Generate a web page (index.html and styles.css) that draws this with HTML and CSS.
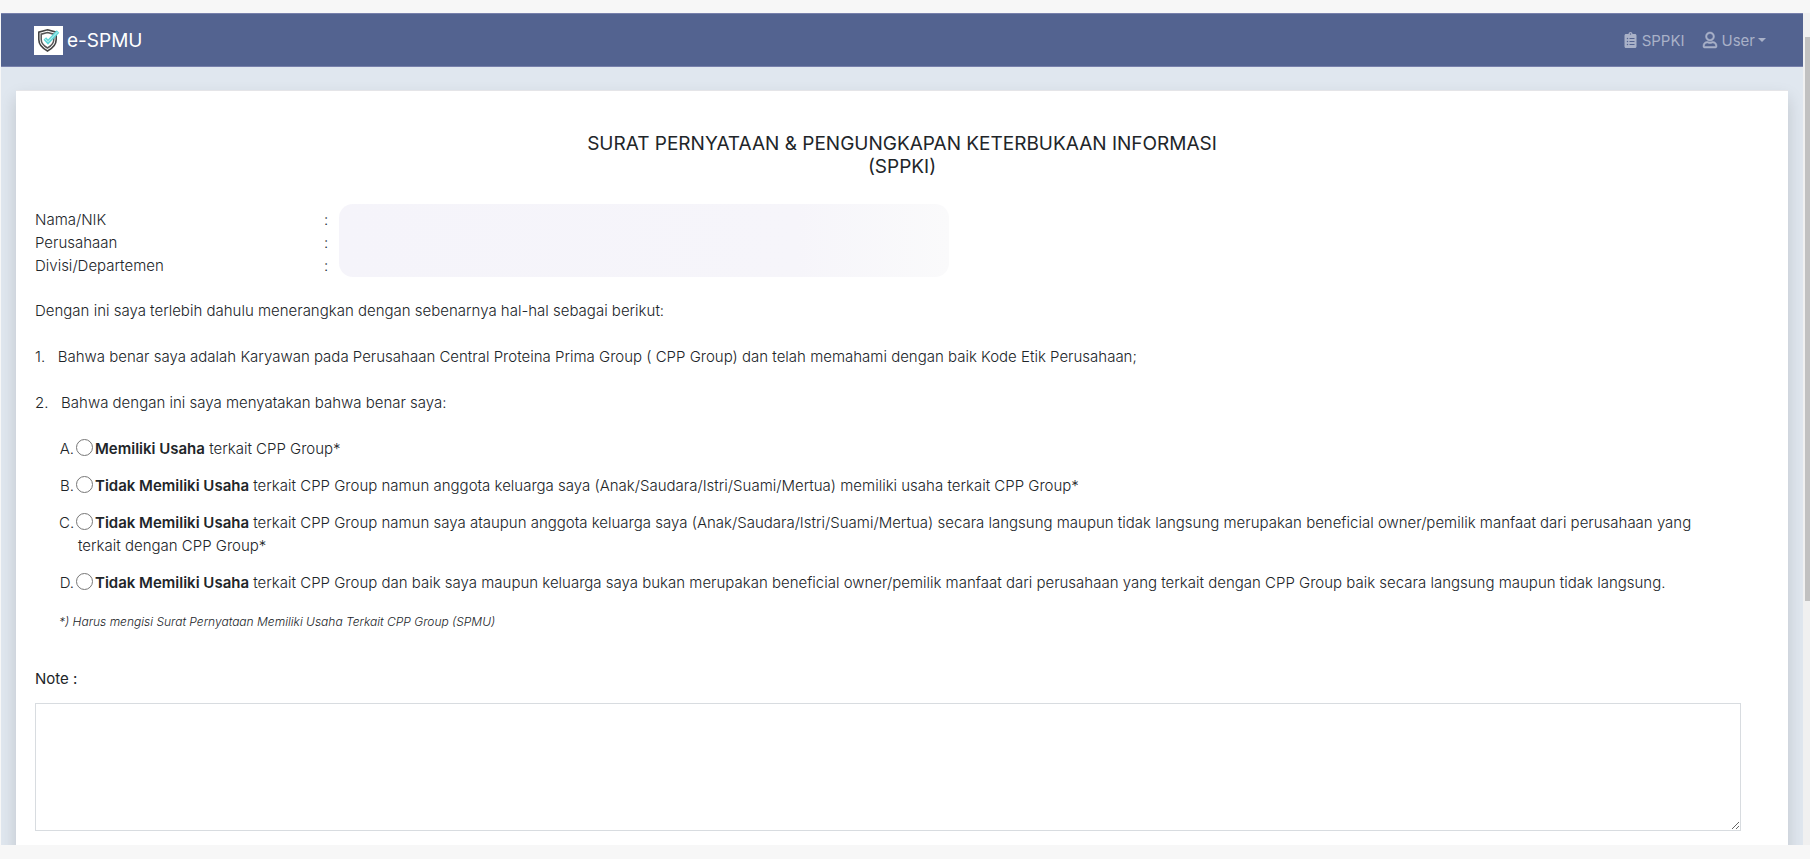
FILE: index.html
```html
<!DOCTYPE html>
<html lang="id">
<head>
<meta charset="utf-8">
<title>e-SPMU</title>
<link rel="stylesheet" href="styles.css">
</head>
<body>
<div class="frame">
  <div class="page">
    <nav class="navbar">
      <a class="brand" href="#">
        <svg class="brand-logo" viewBox="0 0 29 29" aria-hidden="true">
          <rect width="29" height="29" fill="#fff"/>
          <path d="M13.500 3.800 L22.200 6.200 V13.500 C22.200 18.500 18.500 22.300 13.500 25 C8.500 22.300 4.800 18.500 4.800 13.500 V6.200 Z" fill="#fff" stroke="#444" stroke-width="1.600"/>
          <path d="M13.500 6.600 L19.800 8.200 V13.500 C19.800 17 17 20 13.500 22 C10 20 7.200 17 7.200 13.500 V8.200 Z" fill="#fff" stroke="#555" stroke-width="1.500"/>
          <path d="M10.800 12.500 L14 16 L24 5.500" fill="none" stroke="#5fd6d8" stroke-width="3.600"/>
          <path d="M11 12.800 L14 15.800 L23.500 6" fill="none" stroke="#c9f3f3" stroke-width="1"/>
        </svg>
        <span>e-SPMU</span>
      </a>
      <div class="nav-links">
        <a class="nav-link" href="#">
          <svg class="icon-clip" viewBox="0 0 384 512" aria-hidden="true"><path fill="currentColor" d="M336 64h-80c0-35.300-28.700-64-64-64s-64 28.700-64 64H48C21.500 64 0 85.500 0 112v352c0 26.500 21.500 48 48 48h288c26.500 0 48-21.500 48-48V112c0-26.500-21.500-48-48-48zM96 424c-13.300 0-24-10.700-24-24s10.700-24 24-24 24 10.700 24 24-10.700 24-24 24zm0-96c-13.300 0-24-10.700-24-24s10.700-24 24-24 24 10.700 24 24-10.700 24-24 24zm0-96c-13.300 0-24-10.700-24-24s10.700-24 24-24 24 10.700 24 24-10.700 24-24 24zm96-192c13.300 0 24 10.700 24 24s-10.700 24-24 24-24-10.700-24-24 10.700-24 24-24zm128 368c0 4.400-3.600 8-8 8H168c-4.400 0-8-3.600-8-8v-16c0-4.400 3.600-8 8-8h144c4.400 0 8 3.600 8 8v16zm0-96c0 4.400-3.600 8-8 8H168c-4.400 0-8-3.600-8-8v-16c0-4.400 3.600-8 8-8h144c4.400 0 8 3.600 8 8v16zm0-96c0 4.400-3.600 8-8 8H168c-4.400 0-8-3.600-8-8v-16c0-4.400 3.600-8 8-8h144c4.400 0 8 3.600 8 8v16z"/></svg>
          <span>SPPKI</span>
        </a>
        <a class="nav-link" href="#">
          <svg class="icon-user" viewBox="0 0 448 512" aria-hidden="true"><path fill="currentColor" stroke="currentColor" stroke-width="16" d="M313.600 304c-28.700 0-42.500 16-89.600 16-47.100 0-60.800-16-89.600-16C60.200 304 0 364.200 0 438.400V464c0 26.500 21.500 48 48 48h352c26.500 0 48-21.500 48-48v-25.600c0-74.200-60.200-134.400-134.400-134.400zM400 464H48v-25.600c0-47.600 38.800-86.400 86.400-86.400 14.600 0 38.300 16 89.600 16 51.700 0 74.900-16 89.600-16 47.600 0 86.400 38.800 86.400 86.400V464zM224 288c79.500 0 144-64.500 144-144S303.500 0 224 0 80 64.500 80 144s64.500 144 144 144zm0-240c52.900 0 96 43.100 96 96s-43.100 96-96 96-96-43.100-96-96 43.100-96 96-96z"/></svg>
          <span class="user-name">User<span class="caret"></span></span>
        </a>
      </div>
    </nav>
    <main class="content">
      <form class="card">
        <h1 class="title">SURAT PERNYATAAN &amp; PENGUNGKAPAN KETERBUKAAN INFORMASI<br>(SPPKI)</h1>
        <div class="identity">
          <dl class="fields">
            <dt>Nama/NIK</dt><dd>:</dd>
            <dt>Perusahaan</dt><dd>:</dd>
            <dt>Divisi/Departemen</dt><dd>:</dd>
          </dl>
          <div class="redacted"></div>
        </div>
        <p class="text">Dengan ini saya terlebih dahulu menerangkan dengan sebenarnya hal-hal sebagai berikut:</p>
        <p class="text">1. &nbsp; Bahwa benar saya adalah Karyawan pada Perusahaan Central Proteina Prima Group ( CPP Group) dan telah memahami dengan baik Kode Etik Perusahaan;</p>
        <p class="text">2. &nbsp; Bahwa dengan ini saya menyatakan bahwa benar saya:</p>
        <div class="options">
          <div class="option"><span class="letter">A.</span><input type="radio" name="usaha" id="opt-a"><label for="opt-a"><b>Memiliki Usaha</b> terkait CPP Group*</label></div>
          <div class="option"><span class="letter">B.</span><input type="radio" name="usaha" id="opt-b"><label for="opt-b"><b>Tidak Memiliki Usaha</b> terkait CPP Group namun anggota keluarga saya (Anak/Saudara/Istri/Suami/Mertua) memiliki usaha terkait CPP Group*</label></div>
          <div class="option"><span class="letter">C.</span><input type="radio" name="usaha" id="opt-c"><label for="opt-c"><b>Tidak Memiliki Usaha</b> terkait CPP Group namun saya ataupun anggota keluarga saya (Anak/Saudara/Istri/Suami/Mertua) secara langsung maupun tidak langsung merupakan beneficial owner/pemilik manfaat dari perusahaan yang terkait dengan CPP Group*</label></div>
          <div class="option"><span class="letter">D.</span><input type="radio" name="usaha" id="opt-d"><label for="opt-d"><b>Tidak Memiliki Usaha</b> terkait CPP Group dan baik saya maupun keluarga saya bukan merupakan beneficial owner/pemilik manfaat dari perusahaan yang terkait dengan CPP Group baik secara langsung maupun tidak langsung.</label></div>
          <p class="footnote">*) Harus mengisi Surat Pernyataan Memiliki Usaha Terkait CPP Group (SPMU)</p>
        </div>
        <label class="note-label" for="note">Note :</label>
        <textarea class="note" id="note" rows="5"></textarea>
      </form>
    </main>
  </div>
  <div class="scrollbar"><div class="thumb"></div></div>
</div>
</body>
</html>
```
FILE: styles.css
```css
* {
  box-sizing: border-box;
}

body {
  margin: 0;
  height: 100vh;
  padding: 13px 0 14px 1px;
  background: #f7f7f7;
  color: #212529;
  font: 300 15px/23px Inter, sans-serif;
  overflow: hidden;
}

.frame {
  display: flex;
  height: 100%;
}

.page {
  flex: 1;
  min-width: 0;
  overflow: hidden;
  background: #e0e7ef;
}

.scrollbar {
  width: 7px;
  padding: 24px 0 0 2px;
  background: #f0f0f0;
}

.thumb {
  height: 564px;
  background: #c1c1c1;
}

.navbar {
  display: flex;
  justify-content: space-between;
  align-items: center;
  height: 54px;
  padding: 0 37px 0 33px;
  border: solid #7780ab;
  border-width: 1px 0;
  background: #536390;
}

.brand {
  display: flex;
  align-items: center;
  gap: 4px;
  color: #fff;
  font-size: 19px;
  font-weight: 400;
  text-decoration: none;
}

.brand-logo {
  width: 29px;
  height: 29px;
}

.nav-links {
  display: flex;
  gap: 18px;
}

.nav-link {
  display: flex;
  align-items: center;
  gap: 5px;
  color: #a9b1c8;
  font-weight: 400;
  text-decoration: none;
}

.icon-clip {
  width: 13px;
  height: 16px;
}

.icon-user {
  width: 14px;
  height: 16px;
  overflow: visible;
}

.user-name {
  display: flex;
  align-items: center;
  gap: 3px;
}

.caret {
  border: 4px solid transparent;
  border-top-color: currentColor;
  border-bottom: 0;
}

.content {
  padding: 23px 15px 0;
}

.card {
  min-height: 100vh;
  padding: 41px 47px 0 19px;
  border-top: 1px solid #e5e5e8;
  background: #fff;
  box-shadow: 0 8px 16px rgba(0, 0, 0, 0.15);
}

.title {
  margin: 0 -28px 30px 0;
  font-size: 19px;
  font-weight: 400;
  line-height: 23px;
  text-align: center;
}

.identity {
  display: flex;
  align-items: flex-start;
  gap: 11px;
  margin-bottom: 22px;
}

.fields {
  display: grid;
  grid-template-columns: 289px auto;
  margin: 0;
}

.fields dd {
  margin: 0;
}

.redacted {
  width: 610px;
  height: 73px;
  margin: -4px 0 0;
  border-radius: 14px;
  background: linear-gradient(90deg, #f5f4fa, #f6f5fa 75%, #fafafb);
}

.text {
  margin: 0 0 23px;
}

.options {
  padding: 0 20px 0 24px;
}

.option {
  margin-bottom: 14px;
  padding-left: 19px;
  text-indent: -19px;
}

.letter {
  display: inline-block;
  width: 15px;
  margin-right: 2px;
  text-align: right;
  text-indent: 0;
}

.option input {
  width: 17px;
  height: 17px;
  margin: 0 2px 0 0;
  vertical-align: -2px;
}

.option b {
  font-weight: 600;
}

.footnote {
  margin: 16px 0 34px;
  font-size: 12px;
  font-style: italic;
}

.note-label {
  display: block;
  margin-bottom: 13px;
  font-weight: 400;
}

.note {
  display: block;
  width: 100%;
  height: 128px;
  padding: 8px 12px;
  border: 1px solid #d8dce0;
  background: #fff;
  color: inherit;
  font: inherit;
  resize: vertical;
}
```
